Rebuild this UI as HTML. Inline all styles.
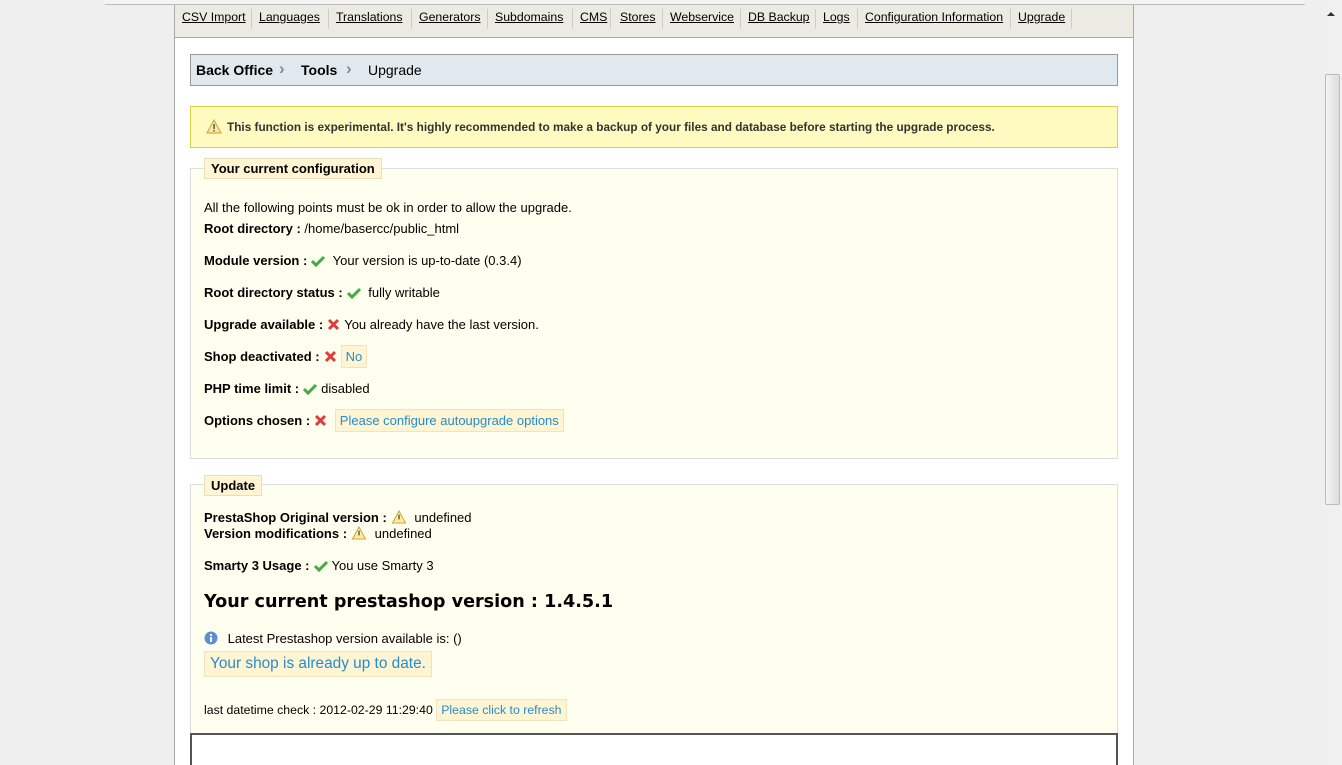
<!DOCTYPE html>
<html><head><meta charset="utf-8"><style>
*{margin:0;padding:0;box-sizing:border-box}
html,body{width:1342px;height:765px;overflow:hidden}
body{background:#efefef;font-family:"Liberation Sans",Arial,sans-serif;font-size:13px;color:#000;position:relative}
.a{position:absolute;white-space:nowrap}
.topline{position:absolute;left:105px;top:0;width:1200px;height:5px;border-bottom:1px solid #bbb;background:#f4f4f4}
#main{position:absolute;left:174px;top:5px;width:960px;height:760px;background:#fff;border-left:1px solid #aaa;border-right:1px solid #aaa;overflow:hidden}
#nav{position:absolute;left:0;top:0;width:958px;height:33px;background:#ecebe3;border-bottom:1px solid #aaa}
#nav span{position:absolute;top:5px;text-decoration:underline;font-size:12.3px;color:#000}
#nav i{position:absolute;top:4px;width:1px;height:20px;background:#ccc}
.bc{position:absolute;left:15px;top:49px;width:928px;height:32px;background:#e2e9ee;border:1px solid #999}
.warn{position:absolute;left:15px;top:101px;width:928px;height:42px;background:#fffabf;border:1px solid #ddd047}
.fs{position:absolute;left:15px;width:928px;background:#fffff0;border:1px solid #ddd}
.lg{position:absolute;background:#fff5d3;border:1px solid #e8dfb8;font-weight:bold;padding:2px 6px;font-size:13px}
.b{font-weight:bold}
.lk{background:#fff5d3;border:1px solid #eee5c0;color:#268ccd;padding:3px 4px}
.ic{display:inline-block;vertical-align:-2px;margin:0 4px}
.sb{position:absolute;left:1323px;top:0;width:19px;height:765px;background:#f0f0f0}
.th{position:absolute;left:1325px;top:74px;width:15px;height:431px;background:linear-gradient(90deg,#f5f5f5,#ddd);border:1px solid #bbb;border-radius:2px}
</style></head><body>
<div class="topline"></div>
<div id="main">
 <div id="nav">
  <span style="left:7px">CSV Import</span><i style="left:76px"></i>
  <span style="left:84px">Languages</span><i style="left:153px"></i>
  <span style="left:161px">Translations</span><i style="left:236px"></i>
  <span style="left:244px">Generators</span><i style="left:312px"></i>
  <span style="left:320px">Subdomains</span><i style="left:397px"></i>
  <span style="left:405px">CMS</span><i style="left:435px"></i>
  <span style="left:445px">Stores</span><i style="left:487px"></i>
  <span style="left:495px">Webservice</span><i style="left:565px"></i>
  <span style="left:573px">DB Backup</span><i style="left:640px"></i>
  <span style="left:648px">Logs</span><i style="left:682px"></i>
  <span style="left:690px">Configuration Information</span><i style="left:835px"></i>
  <span style="left:843px">Upgrade</span><i style="left:896px"></i>
 </div>
 <div class="bc"><span class="a b" style="left:5px;top:7px;font-size:14px">Back Office</span><span class="a" style="left:88px;top:4px;color:#888;font-size:17px;font-weight:bold">›</span><span class="a b" style="left:110px;top:7px;font-size:14px">Tools</span><span class="a" style="left:155px;top:4px;color:#888;font-size:17px;font-weight:bold">›</span><span class="a" style="left:177px;top:7px;font-size:14px">Upgrade</span></div>
 <div class="warn"><svg class="a" style="left:15px;top:12px" width="16" height="15" viewBox="0 0 16 15"><path d="M8 1L15 14H1Z" fill="#fde9a0" stroke="#c8a030"/><rect x="7.3" y="5" width="1.5" height="5" fill="#555"/><rect x="7.3" y="11" width="1.5" height="1.5" fill="#555"/></svg><span class="a b" style="left:36px;top:13px;font-size:11.8px;color:#333">This function is experimental. It's highly recommended to make a backup of your files and database before starting the upgrade process.</span></div>

 <div class="fs" style="top:163px;height:291px"></div>
 <div class="lg" style="left:29px;top:153px">Your current configuration</div>
 <div class="a" style="left:29px;top:195px">All the following points must be ok in order to allow the upgrade.</div>
 <div class="a" style="left:29px;top:216px"><b>Root directory :</b> /home/basercc/public_html</div>
 <div class="a" style="left:29px;top:248px"><b>Module version :</b><svg class="ic" width="14" height="12"><path d="M1 6L5 10L13 2" stroke="#4a4" stroke-width="3" fill="none"/></svg> Your version is up-to-date (0.3.4)</div>
 <div class="a" style="left:29px;top:280px"><b>Root directory status :</b><svg class="ic" width="14" height="12"><path d="M1 6L5 10L13 2" stroke="#4a4" stroke-width="3" fill="none"/></svg> fully writable</div>
 <div class="a" style="left:29px;top:312px"><b>Upgrade available :</b><svg class="ic" width="13" height="13"><path d="M2 2L11 11M11 2L2 11" stroke="#e03a3a" stroke-width="3"/></svg>You already have the last version.</div>
 <div class="a" style="left:29px;top:344px"><b>Shop deactivated :</b><svg class="ic" width="13" height="13"><path d="M2 2L11 11M11 2L2 11" stroke="#e03a3a" stroke-width="3"/></svg><span class="lk">No</span></div>
 <div class="a" style="left:29px;top:376px"><b>PHP time limit :</b><svg class="ic" width="14" height="12"><path d="M1 6L5 10L13 2" stroke="#4a4" stroke-width="3" fill="none"/></svg>disabled</div>
 <div class="a" style="left:29px;top:408px"><b>Options chosen :</b><svg class="ic" width="13" height="13"><path d="M2 2L11 11M11 2L2 11" stroke="#e03a3a" stroke-width="3"/></svg> <span class="lk" style="padding:3px 4px">Please configure autoupgrade options</span></div>

 <div class="fs" style="top:479px;height:255px"></div>
 <div class="lg" style="left:29px;top:470px">Update</div>
 <div class="a" style="left:29px;top:505px"><b>PrestaShop Original version :</b><svg class="ic" width="16" height="14" viewBox="0 0 16 15"><path d="M8 1L15 14H1Z" fill="#fde9a0" stroke="#c8a030"/><rect x="7.3" y="5" width="1.5" height="5" fill="#555"/></svg> undefined</div>
 <div class="a" style="left:29px;top:521px"><b>Version modifications :</b><svg class="ic" width="16" height="14" viewBox="0 0 16 15"><path d="M8 1L15 14H1Z" fill="#fde9a0" stroke="#c8a030"/><rect x="7.3" y="5" width="1.5" height="5" fill="#555"/></svg> undefined</div>
 <div class="a" style="left:29px;top:553px"><b>Smarty 3 Usage :</b><svg class="ic" width="14" height="12"><path d="M1 6L5 10L13 2" stroke="#4a4" stroke-width="3" fill="none"/></svg>You use Smarty 3</div>
 <div class="a" style="left:29px;top:587px;font-family:'DejaVu Sans',sans-serif;font-weight:bold;font-size:17.6px">Your current prestashop version : 1.4.5.1</div>
 <div class="a" style="left:29px;top:626px"><svg class="ic" style="margin:0 6px 0 0" width="14" height="14"><circle cx="7" cy="7" r="6.5" fill="#5a8fd0"/><rect x="6" y="6" width="2" height="5" fill="#fff"/><rect x="6" y="3" width="2" height="2" fill="#fff"/></svg> Latest Prestashop version available is: ()</div>
 <div class="a lk" style="left:29px;top:646px;font-size:15.4px;padding:3px 5px">Your shop is already up to date.</div>
 <div class="a" style="left:29px;top:698px;font-size:12.3px">last datetime check : 2012-02-29 11:29:40 <span class="lk">Please click to refresh</span></div>
 <div class="a" style="left:15px;top:728px;width:928px;height:40px;border:2px solid #555;background:#fff"></div>
</div>
<div class="sb"></div><div class="th"></div>
<div class="a" style="left:1327px;top:12px;width:0;height:0;border-left:4px solid transparent;border-right:4px solid transparent;border-bottom:4px solid #333"></div>
</body></html>
